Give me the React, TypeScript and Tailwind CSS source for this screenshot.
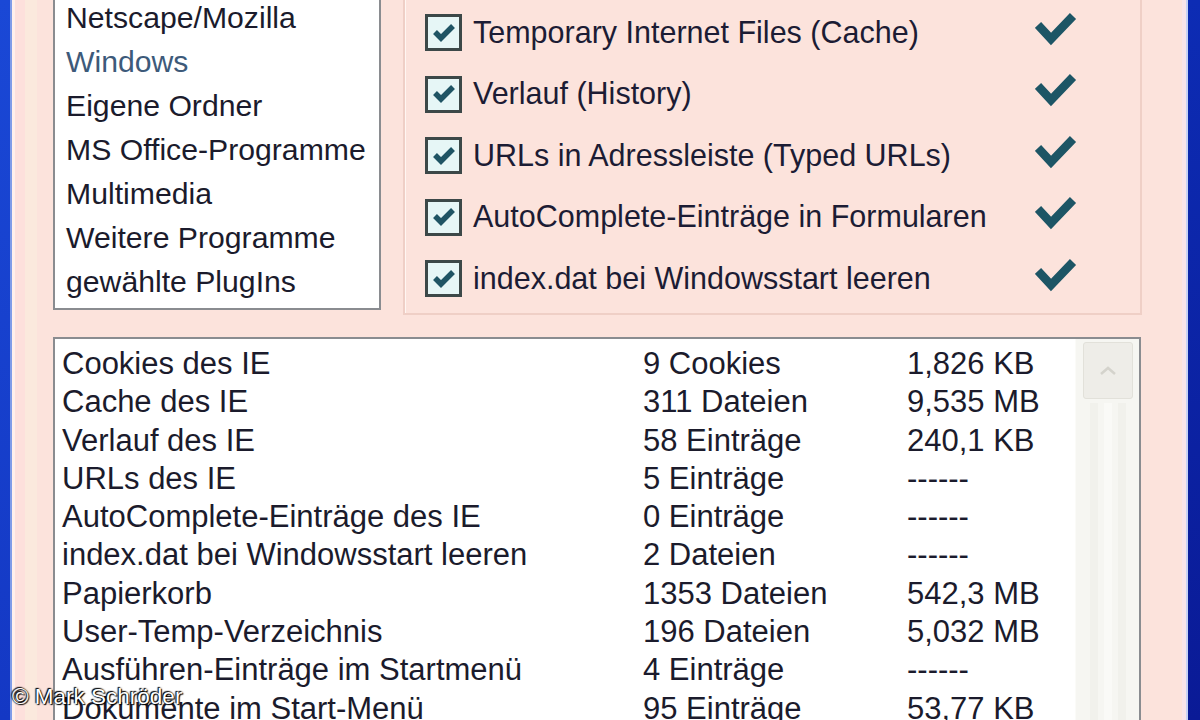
import React from 'react';

const topItems = [
  'Netscape/Mozilla',
  'Windows',
  'Eigene Ordner',
  'MS Office-Programme',
  'Multimedia',
  'Weitere Programme',
  'gewählte PlugIns',
];

const options = [
  'Temporary Internet Files (Cache)',
  'Verlauf (History)',
  'URLs in Adressleiste (Typed URLs)',
  'AutoComplete-Einträge in Formularen',
  'index.dat bei Windowsstart leeren',
];

const rows: [string, string, string][] = [
  ['Cookies des IE', '9 Cookies', '1,826 KB'],
  ['Cache des IE', '311 Dateien', '9,535 MB'],
  ['Verlauf des IE', '58 Einträge', '240,1 KB'],
  ['URLs des IE', '5 Einträge', '------'],
  ['AutoComplete-Einträge des IE', '0 Einträge', '------'],
  ['index.dat bei Windowsstart leeren', '2 Dateien', '------'],
  ['Papierkorb', '1353 Dateien', '542,3 MB'],
  ['User-Temp-Verzeichnis', '196 Dateien', '5,032 MB'],
  ['Ausführen-Einträge im Startmenü', '4 Einträge', '------'],
  ['Dokumente im Start-Menü', '95 Einträge', '53,77 KB'],
];

function CheckBox() {
  return (
    <div className="w-[37px] h-[37px] shrink-0 border-[3px] border-[#3c4848] bg-[#e6f6f6] flex items-center justify-center">
      <svg width="22" height="18" viewBox="0 0 22 18">
        <path d="M2 8 L8 14 L20 2" fill="none" stroke="#1f5464" strokeWidth="5.5" strokeLinejoin="miter" />
      </svg>
    </div>
  );
}

function BigCheck() {
  return (
    <svg width="42" height="34" viewBox="0 0 42 34" className="shrink-0">
      <path d="M3 13 L16 27 L38 4" fill="none" stroke="#1d5565" strokeWidth="8.5" strokeLinejoin="miter" />
    </svg>
  );
}

export default function App() {
  return (
    <div
      className="relative w-[1200px] h-[720px] overflow-hidden flex bg-[#fce3dc] text-[#1b1b2c]"
      style={{ fontFamily: '"Liberation Sans", Arial, sans-serif' }}
    >
      <div className="w-[10px] shrink-0 bg-gradient-to-b from-[#1a48d6] to-[#1438c4]" />
      <div className="w-[2px] shrink-0 bg-[#7f9ce8]" />
      <div className="w-[3px] shrink-0 bg-[#fff0ec]" />
      <div className="w-[10px] shrink-0 bg-[#fde0dc]" />
      <div className="w-[12px] shrink-0 bg-[#fbe9dd]" />

      <div className="flex-1 flex flex-col pl-[16px] -mt-[10px]">
        <div className="flex items-start">
          <div className="w-[328px] h-[320px] shrink-0 bg-white border-2 border-[#8a8c90] pt-[4px] pl-[11px] text-[30.2px]">
            {topItems.map((t, i) => (
              <div
                key={t}
                className={`h-[44px] leading-[44px] whitespace-nowrap ${i === 1 ? 'text-[#3d5a7a]' : ''}`}
              >
                {t}
              </div>
            ))}
          </div>

          <div className="ml-[22px] w-[739px] h-[325px] shrink-0 border-2 border-[#efcfc6] shadow-[inset_1px_1px_0_#fff6f2] pt-[10px] pl-[20px] text-[30.5px]">
            {options.map((o) => (
              <div key={o} className="h-[61.5px] flex items-center">
                <CheckBox />
                <span className="ml-[11px] flex-1 whitespace-nowrap text-[#1c1c34]">{o}</span>
                <div className="mr-[63px] -mt-[8px]">
                  <BigCheck />
                </div>
              </div>
            ))}
          </div>
        </div>

        <div className="mt-[22px] w-[1088px] h-[420px] bg-white border-2 border-[#8a8c90] flex text-[31px]">
          <div className="flex-1 pt-[6px] pl-[7px]">
            {rows.map(([a, b, c]) => (
              <div key={a} className="h-[38.3px] leading-[38.3px] grid grid-cols-[581px_264px_1fr] whitespace-nowrap">
                <span>{a}</span>
                <span>{b}</span>
                <span>{c}</span>
              </div>
            ))}
          </div>
          <div className="w-[64px] shrink-0 bg-[#f6f6f2] border-l border-[#fbfbf8] flex flex-col items-center pt-[3px]">
            <div className="w-[50px] h-[57px] rounded-[3px] bg-[#eeede8] border border-[#e2e1da] flex items-center justify-center">
              <svg width="18" height="10" viewBox="0 0 18 10">
                <path d="M2 8 L9 2 L16 8" fill="none" stroke="#d4d3cc" strokeWidth="2.5" />
              </svg>
            </div>
            <div className="flex-1 w-full flex justify-center gap-[6px] pt-[4px]">
              <div className="w-[8px] bg-[#f1f1ec]" />
              <div className="w-[8px] bg-[#fafaf7]" />
              <div className="w-[8px] bg-[#f1f1ec]" />
            </div>
          </div>
        </div>
      </div>

      <div className="w-[4px] shrink-0 bg-[#f9e5ea]" />
      <div className="w-[2px] shrink-0 bg-[#c8d2f4]" />
      <div className="w-[12px] shrink-0 bg-gradient-to-b from-[#0d2cb4] to-[#0a1a96]" />

      <div
        className="absolute left-[12px] top-[684px] text-[22.5px] leading-[26px] text-white whitespace-nowrap"
        style={{ textShadow: '0 0 2px #000, 1px 1px 1px #000, -1px -1px 1px #000' }}
      >
        © Mark Schröder
      </div>
    </div>
  );
}
